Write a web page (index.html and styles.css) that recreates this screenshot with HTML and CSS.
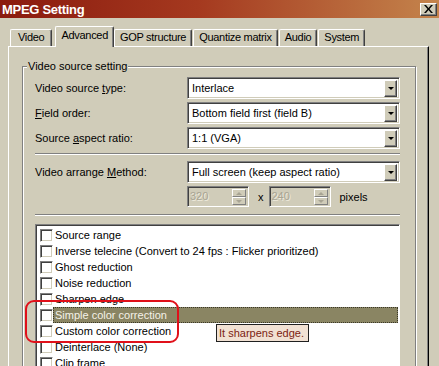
FILE: index.html
```html
<!DOCTYPE html>
<html lang="en">
<head>
    <meta charset="UTF-8">
    <title>MPEG Setting</title>
    <link rel="stylesheet" href="styles.css">
</head>
<body>
    <div class="window">
        <!-- Barra de titulo -->
        <div class="titlebar">
            <span class="title">MPEG Setting</span>
            <span class="close">
                <svg width="9" height="8" viewBox="0 0 9 8"><path d="M0 0h2l2.5 3 2.5-3h2L5.5 4 9 8H7L4.5 5 2 8H0l3.5-4z" fill="#000"/></svg>
            </span>
        </div>

        <div class="content">
            <!-- Pestanas -->
            <div class="tabs">
                <div class="tab">Video</div>
                <div class="tab active">Advanced</div>
                <div class="tab">GOP structure</div>
                <div class="tab">Quantize matrix</div>
                <div class="tab">Audio</div>
                <div class="tab">System</div>
            </div>

            <div class="panel">
                <fieldset class="group">
                    <legend>Video source setting</legend>

                    <div class="row">
                        <label>Video source <u>t</u>ype:</label>
                        <div class="combo"><span class="value">Interlace</span><span class="drop"></span></div>
                    </div>
                    <div class="row">
                        <label><u>F</u>ield order:</label>
                        <div class="combo"><span class="value">Bottom field first (field B)</span><span class="drop"></span></div>
                    </div>
                    <div class="row">
                        <label>Source <u>a</u>spect ratio:</label>
                        <div class="combo"><span class="value">1:1 (VGA)</span><span class="drop"></span></div>
                    </div>

                    <div class="sep"></div>

                    <div class="row">
                        <label>Video arrange <u>M</u>ethod:</label>
                        <div class="combo"><span class="value">Full screen (keep aspect ratio)</span><span class="drop"></span></div>
                    </div>
                    <div class="size-row">
                        <div class="spin"><span class="value">320</span><span class="arrows"><span class="up"></span><span class="down"></span></span></div>
                        <span class="times">x</span>
                        <div class="spin"><span class="value">240</span><span class="arrows"><span class="up"></span><span class="down"></span></span></div>
                        <span class="unit">pixels</span>
                    </div>

                    <div class="sep sep-low"></div>

                    <!-- Lista de filtros -->
                    <div class="list">
                        <div class="item"><span class="check"></span><span class="text">Source range</span></div>
                        <div class="item"><span class="check"></span><span class="text">Inverse telecine (Convert to 24 fps : Flicker prioritized)</span></div>
                        <div class="item"><span class="check"></span><span class="text">Ghost reduction</span></div>
                        <div class="item"><span class="check"></span><span class="text">Noise reduction</span></div>
                        <div class="item"><span class="check"></span><span class="text">Sharpen edge</span></div>
                        <div class="item selected"><span class="check"></span><span class="text">Simple color correction</span></div>
                        <div class="item"><span class="check"></span><span class="text">Custom color correction</span></div>
                        <div class="item"><span class="check"></span><span class="text">Deinterlace (None)</span></div>
                        <div class="item"><span class="check"></span><span class="text">Clip frame</span></div>
                    </div>
                </fieldset>
            </div>
        </div>

        <div class="tooltip">It sharpens edge.</div>
        <div class="mark"></div>
    </div>
</body>
</html>
```

FILE: styles.css
```css
/* Ventana */
body {
    margin: 0;
    background: #d0ccb9;
    font-family: "Liberation Sans", Arial, sans-serif;
    font-size: 11px;
    color: #000;
}

.window {
    position: relative;
    width: 439px;
    height: 366px;
    overflow: hidden;
    background: #d0ccb9;
}

/* Barra de titulo */
.titlebar {
    height: 18px;
    display: flex;
    align-items: center;
    justify-content: space-between;
    padding: 0 2px 0 2px;
    background: linear-gradient(to right, #8a1a0e, #a5391f 45%, #c4844c);
}

.title {
    color: #fff;
    font-weight: bold;
    font-size: 13px;
    letter-spacing: -0.3px;
}

.close {
    width: 15px;
    height: 11px;
    display: flex;
    align-items: center;
    justify-content: center;
    background: #d0ccb9;
    border: 1px solid;
    border-color: #fff #404040 #404040 #fff;
    box-shadow: inset -1px -1px 0 #808080;
}

.content {
    padding: 9px 10px 0 8px;
}

/* Pestanas */
.tabs {
    display: flex;
    align-items: flex-end;
    height: 19px;
    padding-left: 2px;
}

.tab {
    height: 16px;
    line-height: 15px;
    padding: 0 5px;
    margin-right: 1px;
    letter-spacing: -0.3px;
    border: 1px solid;
    border-bottom: none;
    border-color: #fff #404040 #fff #fff;
    box-shadow: inset -1px 0 0 #808080;
    border-radius: 2px 2px 0 0;
}

.tab:first-child {
    padding: 0 7px;
}

.tab.active {
    height: 20px;
    line-height: 16px;
    margin: 0 0 -1px 2px;
    padding: 0 5px;
    position: relative;
    background: #d0ccb9;
    z-index: 1;
}

.panel {
    height: 320px;
    border: 1px solid;
    border-color: #fff #000 #000 #fff;
    box-shadow: inset -1px -1px 0 #808080;
    padding: 13px 12px 0 13px;
}

/* Grupo */
.group {
    margin: 0;
    padding: 4px 15px 0 12px;
    border: 1px solid #808080;
    box-shadow: inset 1px 1px 0 #fff, 1px 1px 0 #fff;
    height: 330px;
}

.group legend {
    padding: 0 1px;
    margin-left: -8px;
    line-height: 13px;
    background: #d0ccb9;
}

.row {
    display: grid;
    grid-template-columns: 152px 1fr;
    align-items: center;
    margin-bottom: 3px;
}

u {
    text-decoration: underline;
    text-underline-offset: 1px;
}

/* Combos */
.combo {
    height: 17px;
    display: flex;
    background: #fff;
    border: 1px solid;
    border-color: #808080 #fff #fff #808080;
    box-shadow: inset 1px 1px 0 #404040, inset -1px -1px 0 #d0ccb9;
    padding: 2px 2px 1px 2px;
}

.combo .value {
    flex: 1;
    line-height: 16px;
    padding-left: 2px;
}

.drop {
    width: 11px;
    background: #d0ccb9;
    border: 1px solid;
    border-color: #fff #404040 #404040 #fff;
    box-shadow: inset -1px -1px 0 #808080;
    display: flex;
    align-items: center;
    justify-content: center;
}

.drop::after {
    content: "";
    border-left: 3px solid transparent;
    border-right: 3px solid transparent;
    border-top: 3px solid #000;
}

.sep {
    height: 0;
    border-top: 1px solid #808080;
    border-bottom: 1px solid #fff;
    margin: 4px 0 6px 0;
}

.sep-low {
    margin: 7px 0 8px 0;
}

/* Tamano */
.size-row {
    display: flex;
    align-items: center;
    margin-left: 152px;
    height: 21px;
}

.spin {
    width: 56px;
    height: 17px;
    display: flex;
    border: 1px solid;
    border-color: #808080 #fff #fff #808080;
    box-shadow: inset 1px 1px 0 #404040;
    padding: 2px 2px 0 2px;
}

.spin .value {
    flex: 1;
    color: #a8a493;
    line-height: 15px;
    text-shadow: 1px 1px 0 #eeeadc;
}

.arrows {
    width: 14px;
    display: flex;
    flex-direction: column;
    margin-bottom: 1px;
}

.arrows span {
    flex: 1;
    display: flex;
    align-items: center;
    justify-content: center;
    border: 1px solid;
    border-color: #fff #808080 #808080 #fff;
}

.arrows .up::after {
    content: "";
    border-left: 3px solid transparent;
    border-right: 3px solid transparent;
    border-bottom: 3px solid #a8a493;
}

.arrows .down::after {
    content: "";
    border-left: 3px solid transparent;
    border-right: 3px solid transparent;
    border-top: 3px solid #a8a493;
}

.times {
    margin: 0 5px 0 9px;
}

.unit {
    margin-left: 9px;
}

/* Lista */
.list {
    height: 150px;
    background: #fff;
    border: 1px solid;
    border-color: #808080 #fff #fff #808080;
    box-shadow: inset 1px 1px 0 #404040;
    padding: 2px 1px 0 2px;
}

.item {
    height: 16px;
    display: flex;
    align-items: center;
    padding-left: 2px;
}

.check {
    width: 11px;
    height: 11px;
    background: #fff;
    border: 1px solid;
    border-color: #808080 #fff #fff #808080;
    box-shadow: inset 1px 1px 0 #404040, inset -1px -1px 0 #d0ccb9;
}

.text {
    flex: 1;
    height: 16px;
    line-height: 16px;
    padding-left: 2px;
    white-space: nowrap;
}

.item.selected .text {
    background: #8a8563;
    color: #f4f2e8;
    outline: 1px dotted #3a3828;
    outline-offset: -1px;
}

/* Tooltip y marca roja */
.tooltip {
    position: absolute;
    left: 216px;
    top: 324px;
    height: 16px;
    line-height: 16px;
    padding: 0 4px 0 2px;
    white-space: nowrap;
    background: #f1e1d3;
    color: #7c1d12;
    border: 1px solid #202020;
}

.mark {
    position: absolute;
    left: 25px;
    top: 300px;
    width: 150px;
    height: 39px;
    border: 2px solid #e0101a;
    border-radius: 9px;
}
```
